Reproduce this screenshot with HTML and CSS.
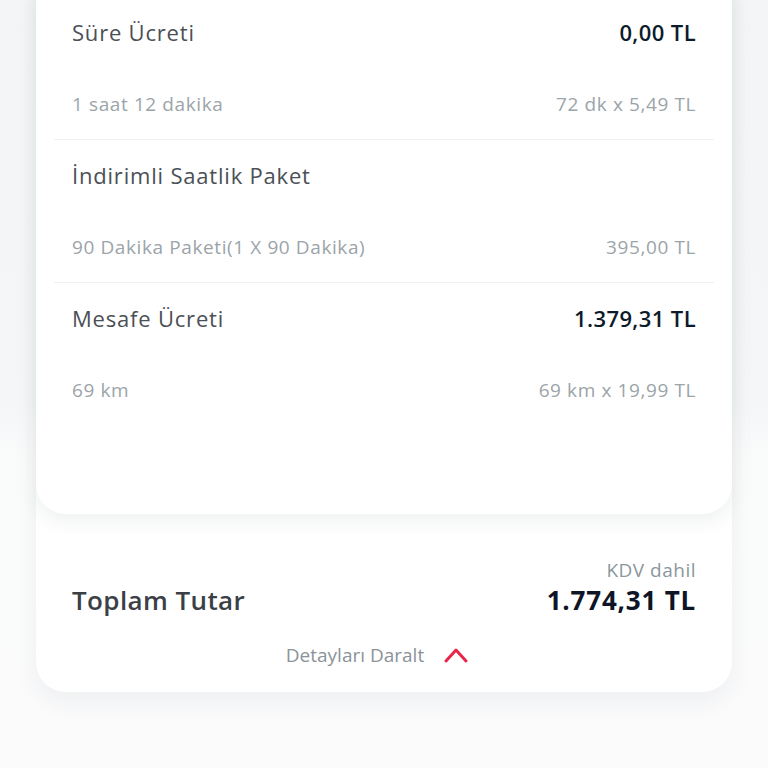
FILE: index.html
```html
<!DOCTYPE html>
<html lang="tr">
<head>
<meta charset="UTF-8">
<meta name="viewport" content="width=device-width, initial-scale=1.0">
<title>Kiralama Özeti</title>
<link rel="stylesheet" href="styles.css">
</head>
<body>

<div class="page">
    <div class="summary">
        <div class="details">
            <div class="section">
                <div class="row title-row">
                    <span class="title">Süre Ücreti</span>
                    <span class="value">0,00 TL</span>
                </div>
                <div class="row sub-row">
                    <span>1 saat 12 dakika</span>
                    <span>72 dk x 5,49 TL</span>
                </div>
            </div>
            <div class="section">
                <div class="row title-row">
                    <span class="title">İndirimli Saatlik Paket</span>
                </div>
                <div class="row sub-row">
                    <span>90 Dakika Paketi(1 X 90 Dakika)</span>
                    <span>395,00 TL</span>
                </div>
            </div>
            <div class="section last">
                <div class="row title-row">
                    <span class="title">Mesafe Ücreti</span>
                    <span class="value">1.379,31 TL</span>
                </div>
                <div class="row sub-row">
                    <span>69 km</span>
                    <span>69 km x 19,99 TL</span>
                </div>
            </div>
        </div>

        <div class="total">
            <div class="vat">KDV dahil</div>
            <div class="row total-row">
                <span>Toplam Tutar</span>
                <span class="total-value">1.774,31 TL</span>
            </div>
            <div class="toggle">
                <span>Detayları Daralt</span>
                <svg class="chevron" width="24" height="16" viewBox="0 0 24 16">
                    <polyline points="2,14 12,3 22,14" fill="none" stroke="#e8264a" stroke-width="3" stroke-linecap="round" stroke-linejoin="round"/>
                </svg>
            </div>
        </div>
    </div>
</div>

</body>
</html>
```

FILE: styles.css
```css
body {
  margin: 0;
  height: 768px;
  overflow: hidden;
  font-family: "Open Sans", "Noto Sans", sans-serif;
  background: linear-gradient(to bottom, #f3f5f6 0, #f4f6f7 400px, #fafbfb 460px, #fbfbfc 100%);
}

.page {
  padding: 0 36px;
}

.summary {
  margin-top: -30px;
  background-color: #fff;
  border-radius: 30px;
  box-shadow: 0 10px 24px rgba(40, 50, 60, 0.06);
}

.details {
  padding: 27px 18px 89px;
  background-color: #fff;
  border-radius: 30px;
  box-shadow: 0 8px 18px rgba(40, 50, 60, 0.07);
}

.section {
  padding: 20px 18px 23px;
  border-bottom: 1px solid #eef0f1;
}

.section.last {
  border-bottom: none;
}

.row {
  display: flex;
  justify-content: space-between;
  align-items: center;
}

.title-row {
  height: 30px;
  font-size: 22px;
  letter-spacing: 0.8px;
  color: #4b5056;
}

.value {
  color: #0c1b2a;
  font-weight: 600;
  letter-spacing: 0.4px;
}

.sub-row {
  height: 24px;
  margin-top: 45px;
  font-size: 19px;
  letter-spacing: 0.6px;
  color: #9ba4a9;
}

.total {
  padding: 45px 36px 25px;
}

.vat {
  height: 22px;
  line-height: 22px;
  text-align: right;
  font-size: 19px;
  letter-spacing: 0.5px;
  color: #8a979c;
}

.total-row {
  height: 32px;
  margin-top: 3px;
  font-size: 26px;
  font-weight: 600;
  letter-spacing: 0.4px;
  color: #3b4046;
}

.total-value {
  color: #0d1526;
  font-weight: 700;
  letter-spacing: 0.8px;
}

.toggle {
  display: flex;
  justify-content: center;
  align-items: center;
  gap: 20px;
  height: 24px;
  margin-top: 27px;
  padding-right: 14px;
  font-size: 19px;
  color: #8a9399;
}

.chevron {
  display: block;
  margin-top: -1px;
}
```
